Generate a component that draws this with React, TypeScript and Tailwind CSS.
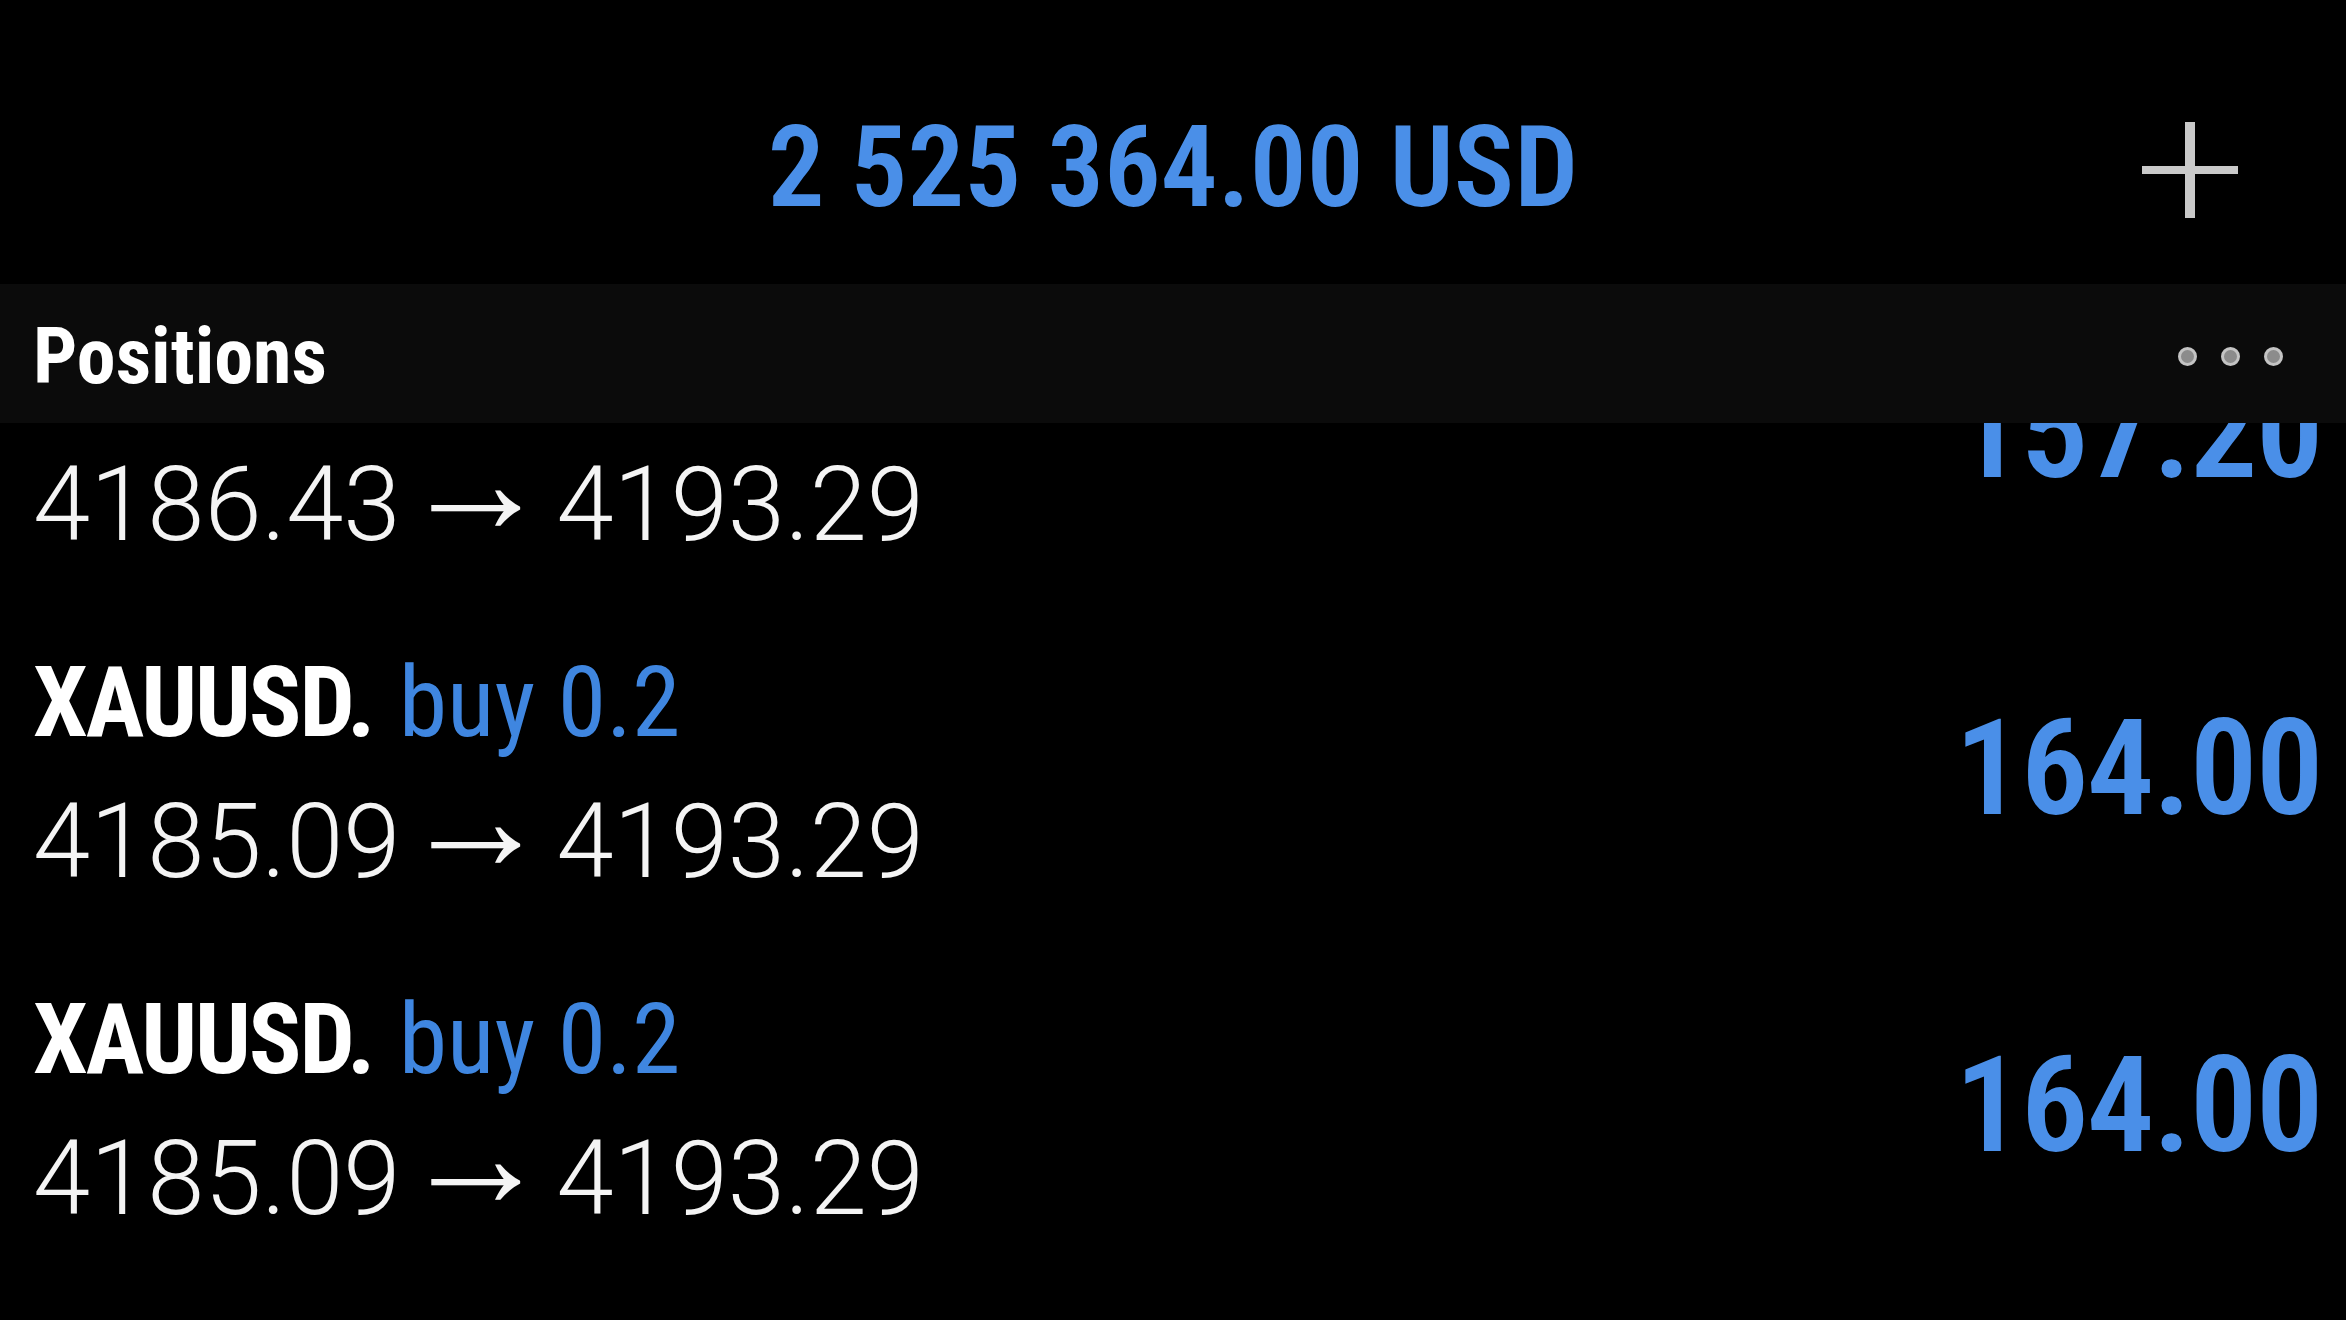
const cond = "font-['Roboto',sans-serif] [font-stretch:75%]";
const semiCond = "font-['Roboto',sans-serif] [font-stretch:87.5%]";

type Position = {
   symbol: string;
   side: string;
   lots: string;
   open: string;
   current: string;
   profit: string;
};

const positions: Position[] = [
   { symbol: "XAUUSD.", side: "buy", lots: "0.2", open: "4186.43", current: "4193.29", profit: "157.20" },
   { symbol: "XAUUSD.", side: "buy", lots: "0.2", open: "4185.09", current: "4193.29", profit: "164.00" },
   { symbol: "XAUUSD.", side: "buy", lots: "0.2", open: "4185.09", current: "4193.29", profit: "164.00" },
];

function PlusIcon() {
   return (
      <svg width="96" height="96" viewBox="0 0 96 96" className="mt-[11px]">
         <rect x="0" y="44" width="96" height="8" fill="#c9c9c9" />
         <rect x="43" y="0" width="10" height="96" fill="#c9c9c9" />
      </svg>
   );
}

function Dot() {
   return <span className="block size-[19px] rounded-full border-[3px] border-[#c4c4c4] bg-[#8c8c8c]" />;
}

function PositionRow({ p }: { p: Position }) {
   return (
      <div className="flex h-[337px] items-center justify-between pl-[33px] pr-[24px]">
         <div className="flex flex-col self-start pt-[49px]">
            <div className="text-[98px] leading-none whitespace-nowrap">
               <span className={`${cond} font-bold tracking-[-0.022em] text-white`}>{p.symbol}</span>{" "}
               <span className={`${semiCond} font-normal text-[#3f86e0]`}>
                  {p.side} {p.lots}
               </span>
            </div>
            <div className="mt-[38px] font-['Roboto',sans-serif] text-[103px] font-light leading-none whitespace-nowrap text-[#f4f4f4]">
               {p.open}
               <span className="mr-[6px] text-[150px] font-thin leading-[0px] [vertical-align:7px]">→</span>
               {p.current}
            </div>
         </div>
         <div className={`${cond} text-[134px] font-semibold tracking-[-0.01em] leading-none text-[#4a8fe8]`}>
            {p.profit}
         </div>
      </div>
   );
}

export default function App() {
   return (
      <div className="flex h-[1320px] w-full flex-col overflow-hidden bg-black">
         <header className="grid h-[284px] shrink-0 grid-cols-[1fr_auto_1fr] items-start pt-[111px]">
            <div />
            <div className={`${cond} text-[113px] font-semibold leading-none whitespace-nowrap text-[#4a8fe8]`}>
               2 525 364.00 USD
            </div>
            <div className="flex justify-end pr-[108px]">
               <PlusIcon />
            </div>
         </header>

         <div className="flex h-[139px] shrink-0 items-center justify-between bg-[#0b0b0b] pl-[33px] pr-[63px] pt-[6px]">
            <h2 className={`${cond} text-[78px] font-bold leading-none text-white`}>Positions</h2>
            <div className="flex items-center gap-[24px]">
               <Dot />
               <Dot />
               <Dot />
            </div>
         </div>

         <div className="min-h-0 flex-1 overflow-hidden">
            <div className="-mt-[160px]">
               {positions.map((p, i) => (
                  <PositionRow key={i} p={p} />
               ))}
            </div>
         </div>
      </div>
   );
}
